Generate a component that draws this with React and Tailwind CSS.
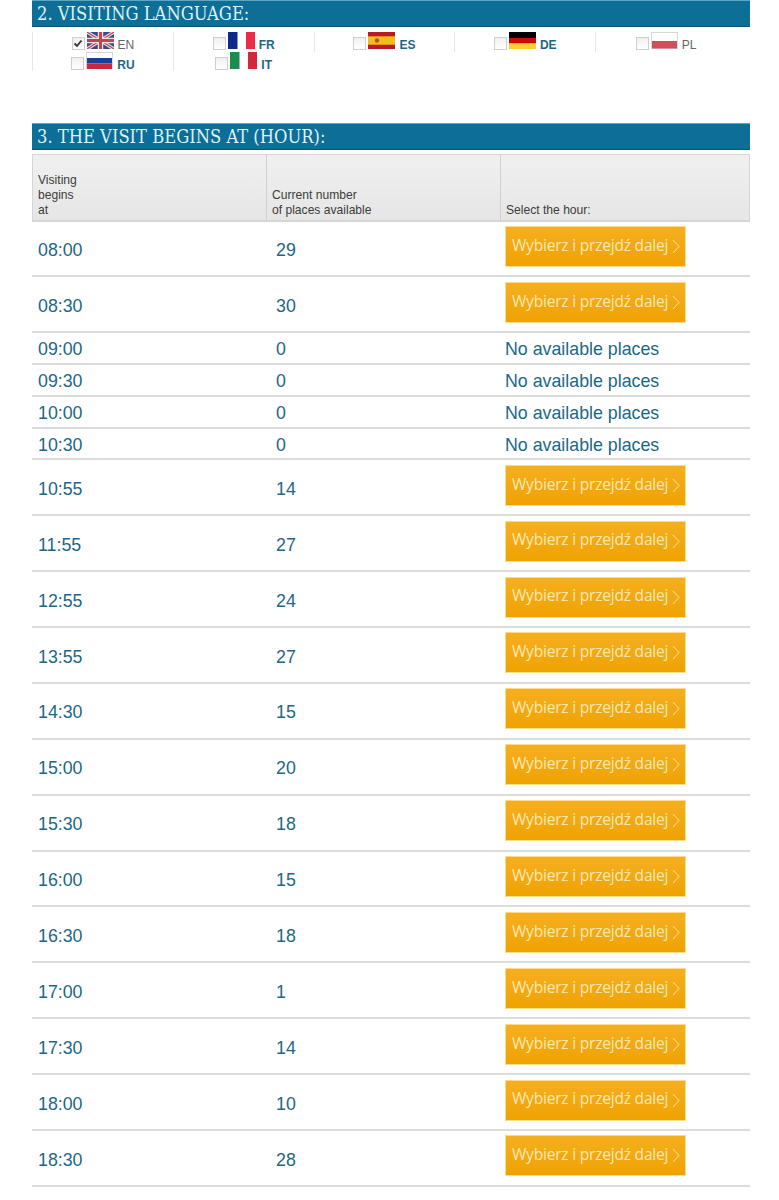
const languages = [
  { code: 'EN', flag: 'uk', checked: true, active: false },
  { code: 'FR', flag: 'fr', active: true },
  { code: 'ES', flag: 'es', active: true },
  { code: 'DE', flag: 'de', active: true },
  { code: 'PL', flag: 'pl', active: false },
  { code: 'RU', flag: 'ru', active: true },
  { code: 'IT', flag: 'it', active: true },
];

const hours = [
  ['08:00', 29],
  ['08:30', 30],
  ['09:00', 0],
  ['09:30', 0],
  ['10:00', 0],
  ['10:30', 0],
  ['10:55', 14],
  ['11:55', 27],
  ['12:55', 24],
  ['13:55', 27],
  ['14:30', 15],
  ['15:00', 20],
  ['15:30', 18],
  ['16:00', 15],
  ['16:30', 18],
  ['17:00', 1],
  ['17:30', 14],
  ['18:00', 10],
  ['18:30', 28],
];

function Flag({ name }) {
  return (
    <svg width="27" height="17" viewBox="0 0 27 17" className="block shrink-0">
      {name === 'uk' && (
        <>
          <rect width="27" height="17" fill="#3a4a80" />
          <path d="M0 0L27 17M27 0L0 17" stroke="#e0e0e8" strokeWidth="3.4" />
          <path d="M0 0L27 17M27 0L0 17" stroke="#c04050" strokeWidth="1.1" />
          <path d="M13.5 0V17M0 8.5H27" stroke="#e6e6ec" strokeWidth="5.4" />
          <path d="M13.5 0V17M0 8.5H27" stroke="#c8404f" strokeWidth="3" />
        </>
      )}
      {name === 'fr' && (
        <>
          <rect width="9.5" height="17" fill="#0c2a8c" />
          <rect x="18" width="9" height="17" fill="#ec2c44" />
        </>
      )}
      {name === 'it' && (
        <>
          <rect width="9.5" height="17" fill="#1d8a4f" />
          <rect x="18" width="9" height="17" fill="#cf2a3c" />
        </>
      )}
      {name === 'es' && (
        <>
          <rect width="27" height="17" fill="#b81c20" />
          <rect y="4.3" width="27" height="8.4" fill="#f6bd18" />
          <circle cx="9" cy="8.5" r="2.2" fill="#b5561e" />
        </>
      )}
      {name === 'de' && (
        <>
          <rect width="27" height="6" fill="#000000" />
          <rect y="6" width="27" height="5.5" fill="#c80d00" />
          <rect y="11.5" width="27" height="5.5" fill="#fcce2e" />
        </>
      )}
      {name === 'pl' && (
        <>
          <rect x="0.5" y="0.5" width="26" height="16" fill="#ffffff" stroke="#d8d8d8" />
          <rect x="1" y="9" width="25" height="7.5" fill="#cf4f5c" />
        </>
      )}
      {name === 'ru' && (
        <>
          <rect x="0.5" y="0.5" width="26" height="16" fill="#ffffff" stroke="#d8d8d8" />
          <rect x="1" y="6" width="25" height="5.5" fill="#1c3f94" />
          <rect x="1" y="11.5" width="25" height="5.5" fill="#c8283c" />
        </>
      )}
    </svg>
  );
}

function Checkbox({ checked }) {
  return (
    <span className="mt-[5px] flex h-[13px] w-[13px] shrink-0 items-center justify-center border border-[#cfcfcf] bg-gradient-to-b from-[#f0f0f0] to-[#ffffff]">
      {checked && (
        <svg width="10" height="9" viewBox="0 0 10 9">
          <path d="M1.5 4.5L4 7L8.5 1.5" fill="none" stroke="#333333" strokeWidth="1.8" />
        </svg>
      )}
    </span>
  );
}

function SectionTitle({ children }) {
  return (
    <div className="flex h-[27px] items-center border-t border-t-[#5fa6c0] border-b border-b-[#0a5573] bg-[#0d6e97] pl-[5px] pt-[1px] font-['DejaVu_Serif',serif] text-[18.2px] font-stretch-condensed text-[#dff2f7]">
      {children}
    </div>
  );
}

function GoButton() {
  return (
    <button className="mb-[4px] flex h-[41px] w-[181px] items-center justify-between border border-[#fbdc8c] bg-gradient-to-b from-[#f5af1e] to-[#efa200] pl-[6px] pr-[5px] font-['Open_Sans',sans-serif] text-[15.5px] text-[#fde8b4]">
      <span className="-mt-[2px] tracking-[-0.2px]">Wybierz i przejdź dalej</span>
      <svg width="8" height="15" viewBox="0 0 8 15" className="shrink-0">
        <path d="M1 1L7 7.5L1 14" fill="none" stroke="#fde8b4" strokeWidth="0.9" />
      </svg>
    </button>
  );
}

export default function App() {
  return (
    <div className="min-h-[1200px] bg-white pl-[32px] pr-[29px] font-['Liberation_Sans',sans-serif]">
      <SectionTitle>2. VISITING LANGUAGE:</SectionTitle>

      <div className="mt-[5px] flex h-[91px] flex-wrap content-start">
        {languages.map((lang) => (
          <div
            key={lang.code}
            className="flex h-[19.5px] w-[140.8px] justify-center gap-[2px] border-l border-[#dfe9ee]"
          >
            <Checkbox checked={lang.checked} />
            <Flag name={lang.flag} />
            <span
              className={`ml-[2px] mt-[6px] text-[12px] leading-[14px] ${
                lang.active ? 'font-bold text-[#1d6785]' : 'text-[#666666]'
              }`}
            >
              {lang.code}
            </span>
          </div>
        ))}
      </div>

      <SectionTitle>3. THE VISIT BEGINS AT (HOUR):</SectionTitle>

      <div className="mt-[4px] grid h-[67.5px] grid-cols-[233px_234px_1fr] border-t border-b-2 border-x border-[#d6d6d6] bg-gradient-to-b from-[#f0f0f0] to-[#e6e6e6] text-[12.1px] leading-[15px] text-[#3c3c3c]">
        <div className="flex items-end px-[5px] pb-[2px]">
          <span>
            Visiting
            <br />
            begins
            <br />
            at
          </span>
        </div>
        <div className="flex items-end border-l border-[#d0d0d0] px-[5px] pb-[2px]">
          <span>
            Current number
            <br />
            of places available
          </span>
        </div>
        <div className="flex items-end border-l border-[#d0d0d0] px-[5px] pb-[2px]">
          <span>Select the hour:</span>
        </div>
      </div>

      {hours.map(([time, places]) => (
        <div
          key={time}
          className={`grid grid-cols-[234px_234px_1fr] border-b-2 border-[#dcdcdc] text-[17.8px] text-[#1d6785] ${
            places > 0 ? 'h-[55.9px]' : 'h-[31.75px]'
          }`}
        >
          <div className={`flex items-center pl-[6px] ${places > 0 ? 'pt-[4px]' : 'pt-[3px]'}`}>{time}</div>
          <div className={`flex items-center pl-[10px] ${places > 0 ? 'pt-[4px]' : 'pt-[3px]'}`}>{places}</div>
          <div className={`flex items-center pl-[5px] ${places > 0 ? '' : 'pt-[3px]'}`}>
            {places > 0 ? <GoButton /> : <span>No available places</span>}
          </div>
        </div>
      ))}
    </div>
  );
}
